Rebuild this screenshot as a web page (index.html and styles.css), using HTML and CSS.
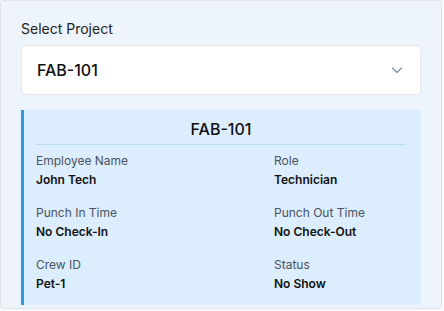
FILE: index.html
```html
<!DOCTYPE html>
<html lang="en">
<head>
  <meta charset="UTF-8">
  <title>Project Attendance</title>
  <link rel="stylesheet" href="styles.css">
</head>
<body>
  <div class="screen">
    <label class="field-label" for="project">Select Project</label>
    <div class="select-box" id="project">
      <span>FAB-101</span>
      <svg class="chevron" width="14" height="14" viewBox="0 0 14 14">
        <path d="M2.5 5 L7 9.5 L11.5 5" fill="none" stroke="#8a94a6" stroke-width="1.4" stroke-linecap="round" stroke-linejoin="round"/>
      </svg>
    </div>

    <div class="card">
      <h2 class="card-title">FAB-101</h2>
      <div class="info-grid">
        <div class="info">
          <div class="info-label">Employee Name</div>
          <div class="info-value">John Tech</div>
        </div>
        <div class="info">
          <div class="info-label">Role</div>
          <div class="info-value">Technician</div>
        </div>
        <div class="info">
          <div class="info-label">Punch In Time</div>
          <div class="info-value">No Check-In</div>
        </div>
        <div class="info">
          <div class="info-label">Punch Out Time</div>
          <div class="info-value">No Check-Out</div>
        </div>
        <div class="info">
          <div class="info-label">Crew ID</div>
          <div class="info-value">Pet-1</div>
        </div>
        <div class="info">
          <div class="info-label">Status</div>
          <div class="info-value">No Show</div>
        </div>
      </div>
    </div>
  </div>
</body>
</html>
```

FILE: styles.css
```css
/* Attendance card layout */
html, body {
  margin: 0;
  background-color: #f7f9fc;
}

body {
  font-family: Inter, "Noto Sans", Arial, sans-serif;
  color: #1c1f24;
}

.screen {
  width: 442px;
  height: 309px;
  box-sizing: border-box;
  background-color: #eef4fc;
  border: 1px solid #dfe4ea;
  border-radius: 3px;
  padding: 19px 20px 0 20px;
  overflow: hidden;
}

.field-label {
  display: block;
  font-size: 14px;
  line-height: 18px;
  color: #222;
  margin-bottom: 7px;
}

.select-box {
  display: flex;
  align-items: center;
  justify-content: space-between;
  height: 50px;
  box-sizing: border-box;
  padding: 0 16px 0 15px;
  background-color: #fff;
  border: 1px solid #e3e8ee;
  border-radius: 4px;
  font-size: 16px;
  font-weight: 500;
  color: #111;
}

.card {
  margin-top: 15px;
  background-color: #dcedfd;
  border-left: 3px solid #3399dd;
  padding: 7px 15px 11px 12px;
}

.card-title {
  margin: 0;
  text-align: center;
  font-size: 16px;
  font-weight: 500;
  line-height: 24px;
  color: #111;
  padding-bottom: 3px;
  border-bottom: 1px solid #b9dcf3;
}

.info-grid {
  display: grid;
  grid-template-columns: 1fr 132px;
  row-gap: 14px;
  margin-top: 7px;
}

.info-label {
  font-size: 12px;
  line-height: 18px;
  color: #4a5260;
}

.info-value {
  font-size: 12px;
  font-weight: 600;
  line-height: 20px;
  color: #111;
}
```
